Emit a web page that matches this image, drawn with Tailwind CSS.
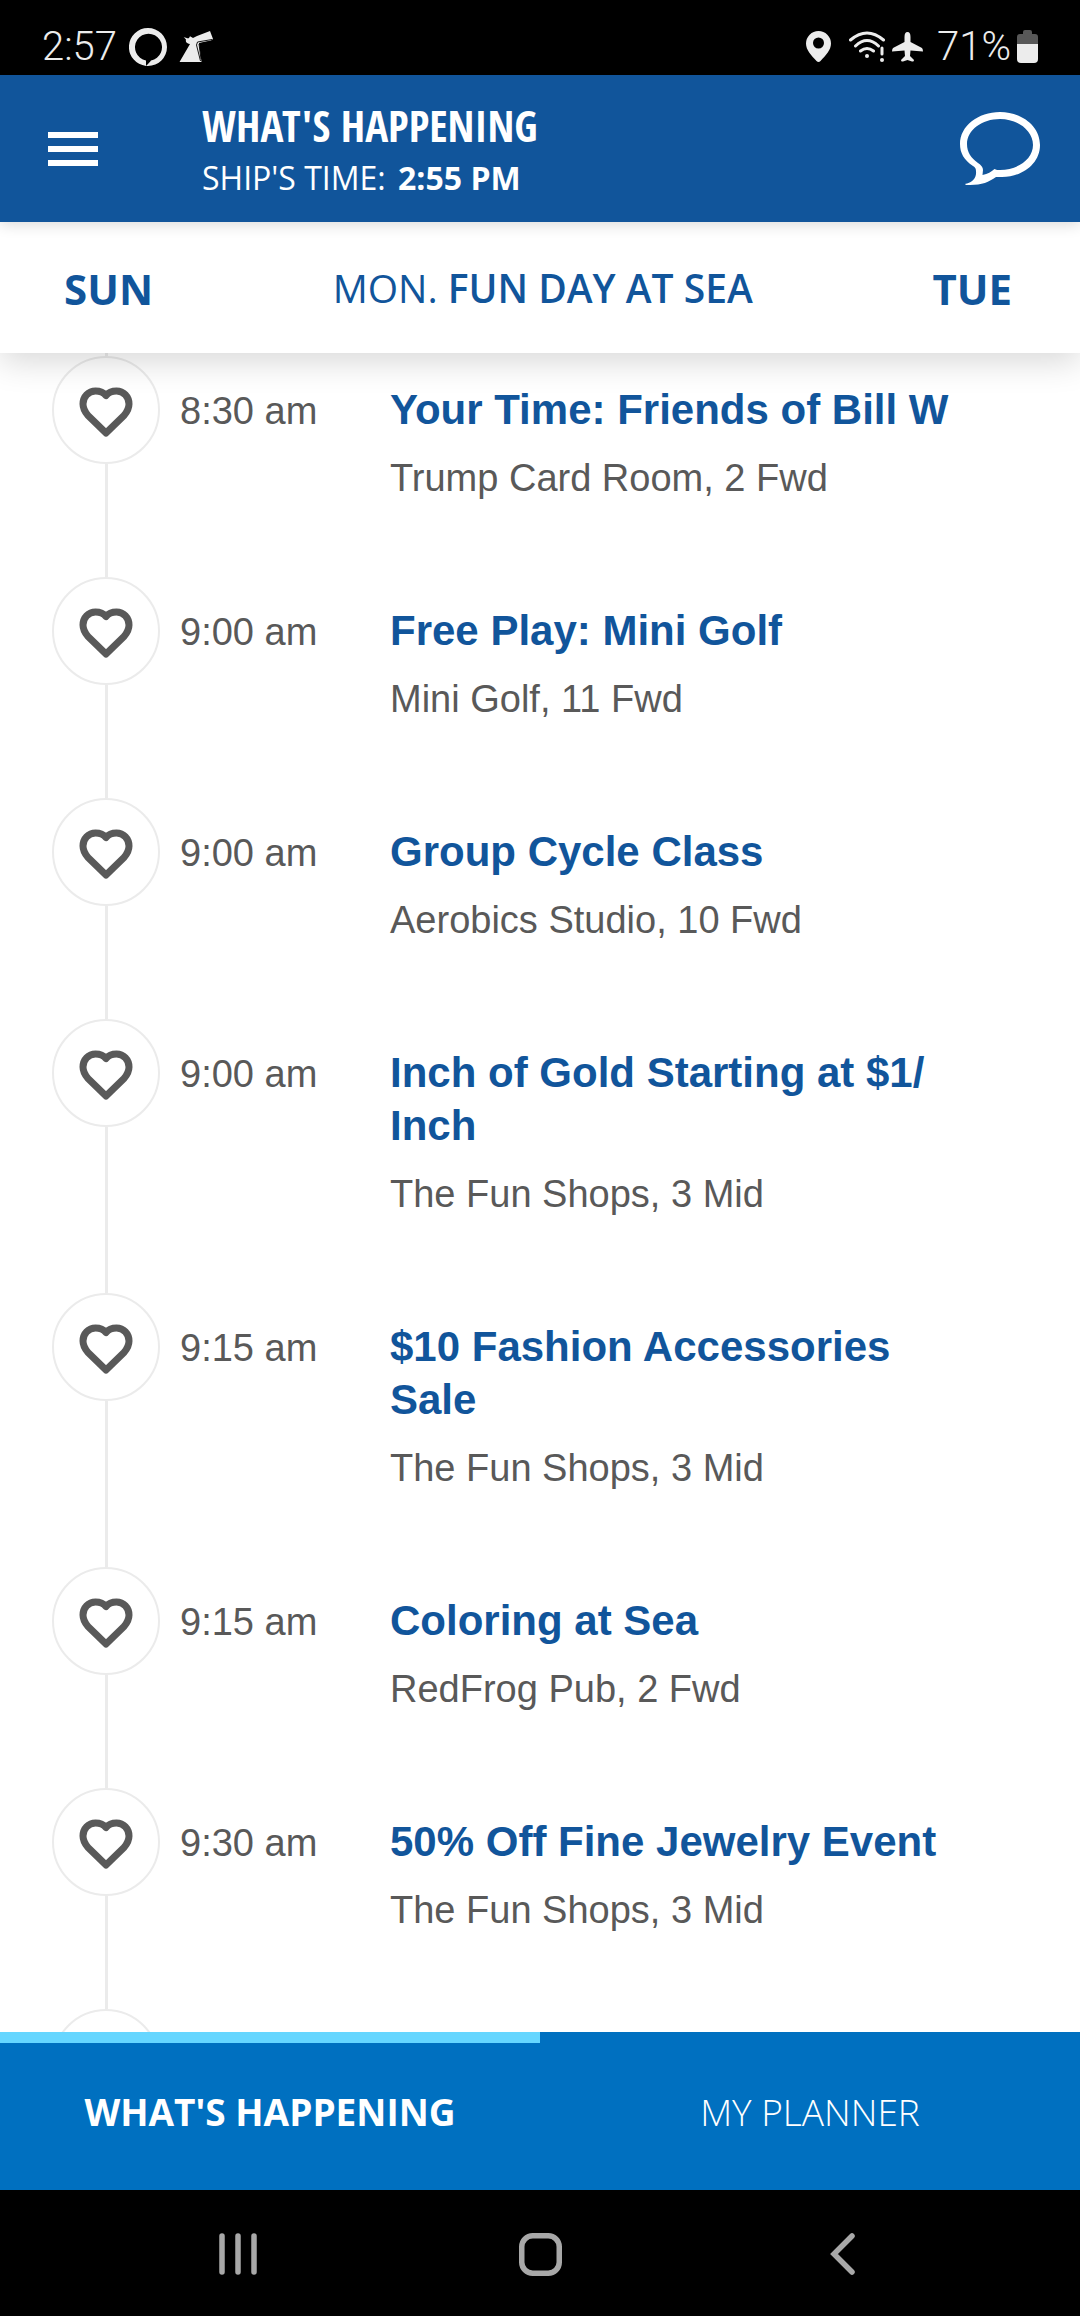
<!DOCTYPE html>
<html lang="en">
<head>
    <meta charset="UTF-8">
    <meta name="viewport" content="width=device-width, initial-scale=1.0">
    <title>What's Happening</title>
    <script src="https://cdn.jsdelivr.net/npm/@tailwindcss/browser@4"></script>
</head>
<body class="flex h-screen flex-col overflow-hidden bg-white font-['Open_Sans',sans-serif]">

    <!-- Status bar -->
    <div class="flex h-[75px] shrink-0 items-center justify-between bg-black pt-[18px] pr-[42px] pl-[42px] font-['Roboto',sans-serif] text-[40px] font-light text-[#ececec]">
        <div class="flex items-center gap-3">
            <span>2:57</span>
            <svg class="h-[38px] w-[38px]" viewBox="0 0 38 38" fill="currentColor">
                <path fill-rule="evenodd" d="M19 0A19 19 0 0 1 19 38L17 38L17 32.5A13.5 13.5 0 1 1 22 32.5C21 34 19 36 17 37.9A19 19 0 0 1 19 0Z"/>
            </svg>
            <svg class="h-[32px] w-[34px]" viewBox="0 0 34 32" fill="currentColor">
                <path d="M31 0L34 8L32 9.500L20 12L22.500 31H0.500L11 13C7 12.500 6.500 10 7 8.500L4.500 5.700C7 7 9 7.500 10 7L11 5.300L14 7L18 5Z"/>
                <path d="M33 8.500L18.500 11L17.500 14L21.500 30M29 11L20 13L22 28" fill="none" stroke="#000" stroke-width="0.900"/>
            </svg>
        </div>
        <div class="flex items-center">
            <svg class="mr-[18px] h-[31px] w-[25px]" viewBox="0 0 25 31" fill="currentColor">
                <path fill-rule="evenodd" d="M12.500 0A12.500 12.500 0 0 1 25 12.500C25 19 20 24 14.500 30Q12.500 32 10.500 30C5 24 0 19 0 12.500A12.500 12.500 0 0 1 12.500 0ZM12.500 6.500A5.500 5.500 0 1 0 12.500 17.500A5.500 5.500 0 1 0 12.500 6.500Z"/>
            </svg>
            <svg class="mr-[7px] h-[31px] w-[36px]" viewBox="0 0 36 31" fill="none" stroke="currentColor" stroke-width="3" stroke-linecap="round">
                <path d="M1.500 9Q18 -5 34.500 9M6.500 15Q18 4 29.500 15M11.500 20Q18 15 24.500 20"/>
                <path d="M33 17V23" stroke-width="3"/>
                <circle cx="18" cy="25" r="2" fill="currentColor" stroke="none"/>
                <circle cx="33" cy="29" r="2" fill="currentColor" stroke="none"/>
            </svg>
            <svg class="mr-[14px] h-[30px] w-[31px]" viewBox="0 0 31 30" fill="currentColor">
                <path d="M15.500 0Q18.500 0 18.500 5V10L30 16Q31 17 31 19.500L18.500 18.500L18 24L22 28Q22 30 20 29.500L15.500 28L11 29.500Q9 30 9 28L13 24L12.500 18.500L0 19.500Q0 17 1 16L12.500 10V5Q12.500 0 15.500 0Z"/>
            </svg>
            <span>71%</span>
            <svg class="ml-[6px] h-[33px] w-[21px]" viewBox="0 0 21 33">
                <path d="M6 2Q6 0 8 0H13Q15 0 15 2V4H18Q21 4 21 7V14H0V7Q0 4 3 4H6Z" fill="#585858"/>
                <path d="M0 14H21V29Q21 33 17 33H4Q0 33 0 29Z" fill="currentColor"/>
            </svg>
        </div>
    </div>

    <!-- App header -->
    <header class="relative z-20 flex h-[147px] shrink-0 items-center bg-[#11559b] px-10 text-white shadow-[0_2px_14px_rgba(0,0,0,0.16)]">
        <button type="button" aria-label="Menu" class="p-2">
            <svg class="h-[34px] w-[50px]" viewBox="0 0 50 34" fill="currentColor">
                <path d="M0 0H50V6H0ZM0 14H50V20H0ZM0 28H50V34H0Z"/>
            </svg>
        </button>
        <div class="ml-24 flex-1 pt-1.5">
            <h1 class="font-['Open_Sans_Condensed','Roboto_Condensed','Noto_Sans_Condensed','Roboto',sans-serif] text-[43px]/[52px] font-extrabold">WHAT'S HAPPENING</h1>
            <p class="text-[32px]/[52px]">SHIP'S TIME: <strong class="ml-1 font-bold">2:55 PM</strong></p>
        </div>
        <button type="button" aria-label="Chat">
            <svg class="h-[74px] w-[80px]" viewBox="0 0 80 74" fill="currentColor">
                <path fill-rule="evenodd" d="M5 72C14 70 16.500 65 16 59C16 56 14.500 55 13 54C4 48 0 41 0 32C0 14 18 0 40 0S80 14 80 33S62 65 42 65L36 65C29 70 22 73 10 73C7 73 5 73 5 72ZM40 7C22 7 7 18 7 32C7 40 11 46 18 51C21 53 23 55 23 58L22.500 63C28 62 31 60 34.500 57C36 58 38 58 40 58C58 58 73 47 73 33S58 7 40 7Z"/>
            </svg>
        </button>
    </header>

    <!-- Day picker -->
    <nav class="relative z-10 flex h-[131px] shrink-0 items-center justify-between bg-white pt-0.5 pr-[68px] pl-16 text-[42px] text-[#11559b] shadow-[0_8px_32px_rgba(0,0,0,0.16)]">
        <button type="button" class="font-bold">SUN</button>
        <h2 class="text-[39px]">MON. <span class="font-semibold">FUN DAY AT SEA</span></h2>
        <button type="button" class="font-bold">TUE</button>
    </nav>

    <!-- Events -->
    <main class="min-h-0 flex-1 overflow-hidden pr-[100px] pl-[52px] font-['Liberation_Sans',Arial,sans-serif]">
        <div class="flex h-[3px] w-[108px] justify-center"><div class="w-[3px] bg-[#ebebeb]"></div></div>
        <ul id="events"></ul>
    </main>

    <!-- Tabs -->
    <nav class="grid h-[158px] shrink-0 grid-cols-2 bg-[#0070c0] text-[37px] text-white">
        <button type="button" class="border-t-[11px] border-[#66d6ff] pb-2.5 font-bold">WHAT'S HAPPENING</button>
        <button type="button" class="border-t-[11px] border-transparent pb-2.5 font-light">MY PLANNER</button>
    </nav>

    <!-- System navigation -->
    <div class="grid h-[126px] shrink-0 grid-cols-3 place-items-center bg-black px-[87px] pt-0.5 text-[#a8a8a8]">
        <button type="button" aria-label="Recent apps">
            <svg class="h-[42px] w-[38px]" viewBox="0 0 38 42" fill="none" stroke="currentColor" stroke-width="5.5" stroke-linecap="round">
                <path d="M3 3V39M19 3V39M35 3V39"/>
            </svg>
        </button>
        <button type="button" aria-label="Home">
            <svg class="h-[43px] w-[43px]" viewBox="0 0 43 43" fill="none" stroke="currentColor" stroke-width="5.5">
                <rect x="2.750" y="2.750" width="37.500" height="37.500" rx="11"/>
            </svg>
        </button>
        <button type="button" aria-label="Back">
            <svg class="h-[42px] w-[25px]" viewBox="0 0 25 42" fill="none" stroke="currentColor" stroke-width="5.5" stroke-linecap="round">
                <path d="M22 3L4 21L22 39"/>
            </svg>
        </button>
    </div>

    <script>
        const events = [
            { time: '8:30 am', title: 'Your Time: Friends of Bill W', place: 'Trump Card Room, 2 Fwd' },
            { time: '9:00 am', title: 'Free Play: Mini Golf', place: 'Mini Golf, 11 Fwd' },
            { time: '9:00 am', title: 'Group Cycle Class', place: 'Aerobics Studio, 10 Fwd' },
            { time: '9:00 am', title: 'Inch of Gold Starting at $1/<wbr>Inch', place: 'The Fun Shops, 3 Mid' },
            { time: '9:15 am', title: '$10 Fashion Accessories Sale', place: 'The Fun Shops, 3 Mid' },
            { time: '9:15 am', title: 'Coloring at Sea', place: 'RedFrog Pub, 2 Fwd' },
            { time: '9:30 am', title: '50% Off Fine Jewelry Event', place: 'The Fun Shops, 3 Mid' },
            { time: '', title: '', place: '' }
        ];

        document.getElementById('events').innerHTML = events.map(e => `
            <li class="flex">
                <div class="flex w-[108px] shrink-0 flex-col items-center">
                    <button type="button" aria-label="Add to my planner" class="flex h-[108px] w-[108px] shrink-0 items-center justify-center rounded-full border-2 border-[#ebebeb] pt-1">
                        <svg class="h-[50px] w-[54px]" viewBox="0 0 54 50" fill="none" stroke="#595959" stroke-width="7" stroke-linejoin="round">
                            <path d="M27 8.500C25 6 21 4 16.500 4C9.500 4 4 9.500 4 17C4 21.500 6 25 9 28.500L27 46L45 28.500C48 25 50 21.500 50 17C50 9.500 44.500 4 37.500 4C33 4 29 6 27 8.500Z"/>
                        </svg>
                    </button>
                    <div class="w-[3px] flex-1 bg-[#ebebeb]"></div>
                </div>
                <div class="flex flex-1 items-baseline pt-[27px] pb-[75px] pl-5 text-[#595959]">
                    <time class="w-[210px] shrink-0 text-[38px]/[53px]">${e.time}</time>
                    <div class="flex-1">
                        <h3 class="text-[42px]/[53px] font-bold text-[#11559b]">${e.title}</h3>
                        <p class="mt-[18px] text-[38px]/[48px]">${e.place}</p>
                    </div>
                </div>
            </li>
        `).join('');
    </script>
</body>
</html>
